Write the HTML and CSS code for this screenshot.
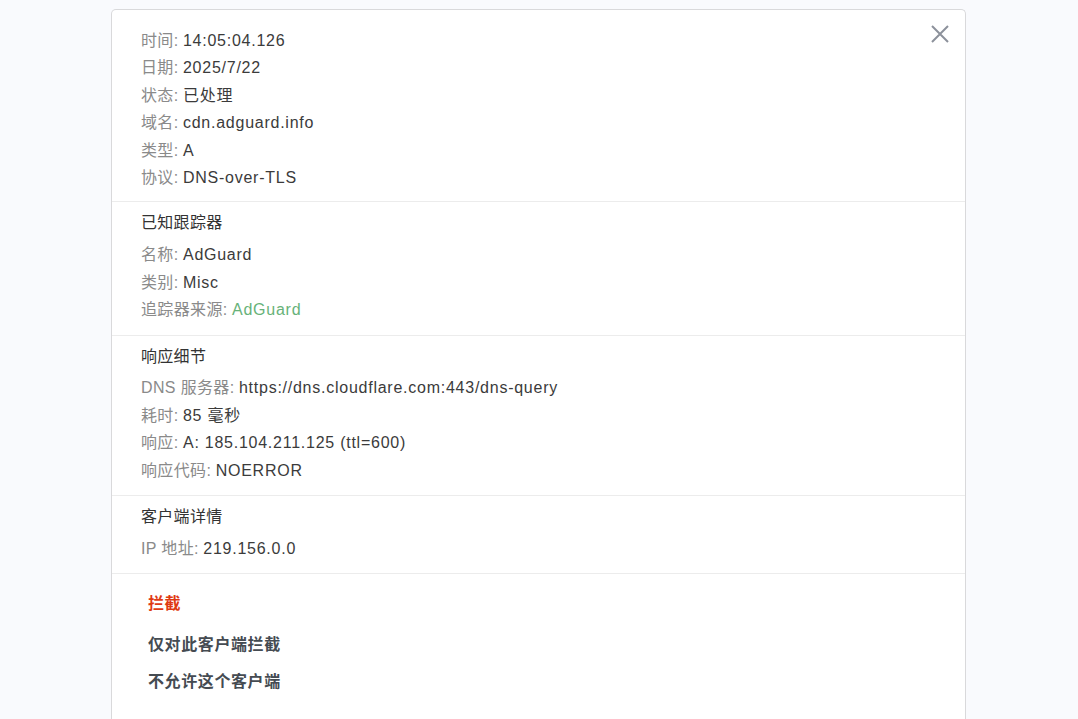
FILE: index.html
```html
<!DOCTYPE html>
<html lang="zh">
<head>
<meta charset="utf-8">
<title>详情</title>
<link rel="stylesheet" href="styles.css">
</head>
<body>
<div class="card">
  <button class="close" aria-label="关闭">
    <svg width="20" height="20" viewBox="0 0 20 20"><path d="M2 2 L18 18 M18 2 L2 18" stroke="#8c919b" stroke-width="2" fill="none"/></svg>
  </button>
  <section class="sec first">
    <div class="row"><span class="k">时间:</span> <span class="v">14:05:04.126</span></div>
    <div class="row"><span class="k">日期:</span> <span class="v">2025/7/22</span></div>
    <div class="row"><span class="k">状态:</span> <span class="v">已处理</span></div>
    <div class="row"><span class="k">域名:</span> <span class="v">cdn.adguard.info</span></div>
    <div class="row"><span class="k">类型:</span> <span class="v">A</span></div>
    <div class="row"><span class="k">协议:</span> <span class="v">DNS-over-TLS</span></div>
  </section>
  <section class="sec">
    <div class="title">已知跟踪器</div>
    <div class="row"><span class="k">名称:</span> <span class="v">AdGuard</span></div>
    <div class="row"><span class="k">类别:</span> <span class="v">Misc</span></div>
    <div class="row"><span class="k">追踪器来源:</span> <a class="v link" href="#">AdGuard</a></div>
  </section>
  <section class="sec">
    <div class="title">响应细节</div>
    <div class="row"><span class="k">DNS 服务器:</span> <span class="v">https://dns.cloudflare.com:443/dns-query</span></div>
    <div class="row"><span class="k">耗时:</span> <span class="v">85 毫秒</span></div>
    <div class="row"><span class="k">响应:</span> <span class="v">A: 185.104.211.125 (ttl=600)</span></div>
    <div class="row"><span class="k">响应代码:</span> <span class="v">NOERROR</span></div>
  </section>
  <section class="sec">
    <div class="title">客户端详情</div>
    <div class="row"><span class="k">IP 地址:</span> <span class="v">219.156.0.0</span></div>
  </section>
  <section class="actions">
    <button class="btn danger">拦截</button>
    <button class="btn">仅对此客户端拦截</button>
    <button class="btn">不允许这个客户端</button>
  </section>
</div>
</body>
</html>
```

FILE: styles.css
```css
html, body {
  margin: 0;
  padding: 0;
  background: #f9fafd;
  height: 100%;
  overflow: hidden;
}
body {
  font-family: "Liberation Sans", "Noto Sans CJK SC", sans-serif;
  font-size: 16px;
  color: #3b3b3b;
  padding: 9px 0 0 111px;
  box-sizing: border-box;
}
.card {
  position: relative;
  width: 855px;
  min-height: 720px;
  background: #fff;
  border: 1px solid #d9d9db;
  border-bottom: none;
  border-radius: 5px 5px 0 0;
  box-sizing: border-box;
}
.close {
  position: absolute;
  top: 14px;
  right: 15px;
  background: none;
  border: none;
  padding: 0;
  width: 20px;
  height: 20px;
  cursor: pointer;
}
.close svg { display: block; }
.sec {
  padding: 7px 20px 11px 29px;
  border-bottom: 1px solid #ececec;
}
.sec.first {
  padding-top: 17px;
  padding-bottom: 10px;
}
.row {
  line-height: 27.4px;
}
.k { color: #8a8a8a; letter-spacing: 0.35px; }
.v { color: #3b3b3b; letter-spacing: 0.75px; }
.link { color: #67b279; text-decoration: none; }
.title {
  line-height: 27.4px;
  color: #333;
  letter-spacing: 0.3px;
  margin-bottom: 4.5px;
}
.actions {
  display: flex;
  flex-direction: column;
  align-items: flex-start;
  padding: 15px 0 0 29px;
  gap: 7px;
}
.btn {
  font: inherit;
  font-weight: bold;
  font-size: 16px;
  letter-spacing: 0.6px;
  background: none;
  border: none;
  color: #454b52;
  padding: 0 7px;
  line-height: 30px;
  cursor: pointer;
}
.btn.danger { color: #df3a13; margin-bottom: 4px; }
```
